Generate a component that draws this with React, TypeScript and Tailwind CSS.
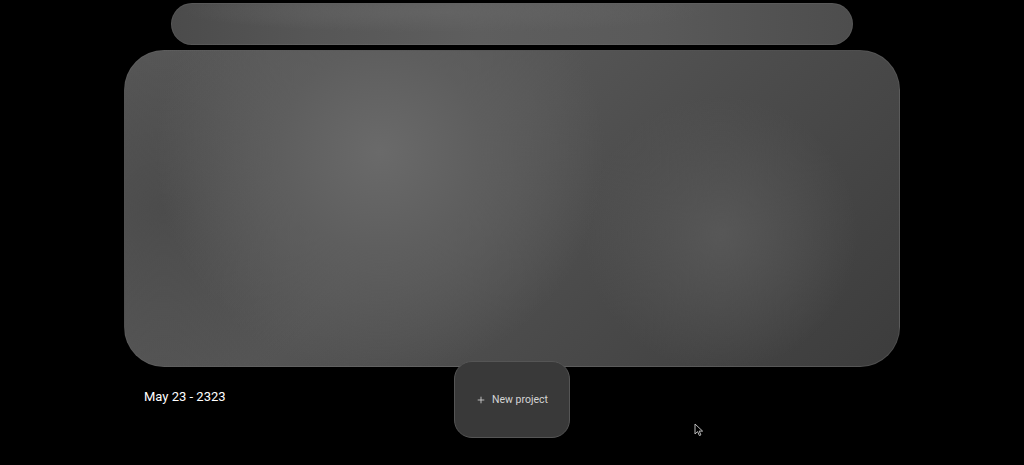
import React from 'react';
import { Plus } from 'lucide-react';

const Cursor = () => (
  <svg className="absolute left-[694px] top-[423px]" width="10" height="14" viewBox="0 0 10 14" fill="none">
    <path d="M1 1 L1 11 L3.6 8.6 L5.4 12.6 L6.9 11.9 L5.2 8.1 L8.6 8.1 Z" fill="#000" stroke="#bdbdbd" strokeWidth="1" strokeLinejoin="round" />
  </svg>
);

const TopBar = () => (
  <div className="mt-[3px] h-[42px] w-[682px] rounded-full border border-[#6a6a6a]/40 bg-[radial-gradient(ellipse_at_40%_20%,#636363_0%,transparent_45%),linear-gradient(90deg,#4b4b4b_0%,#565656_20%,#5e5e5e_45%,#5a5a5a_70%,#4d4d4d_100%)]" />
);

const HeroCard = () => (
  <div className="mt-[5px] h-[317px] w-[776px] rounded-[40px] border border-[#6a6a6a]/40 bg-[radial-gradient(circle_at_33%_32%,#6a6a6a_0%,#5e5e5e_18%,transparent_40%),radial-gradient(circle_at_77%_58%,#575757_0%,transparent_22%),radial-gradient(circle_at_5%_50%,#4c4c4c_0%,transparent_25%),linear-gradient(135deg,#585858_0%,#555555_40%,#4a4a4a_65%,#3c3c3c_100%)]" />
);

const NewProjectButton = () => (
  <button className="-mt-[6px] flex h-[77px] w-[116px] items-center justify-center gap-[6px] rounded-[18px] border border-[#555555] bg-[#393939] text-[10.5px] text-[#d4d4d4]">
    <Plus className="h-[10px] w-[10px]" strokeWidth={2} />
    <span>New project</span>
  </button>
);

export default function App() {
  return (
    <div className="relative h-[465px] w-full overflow-hidden bg-black font-['Roboto',sans-serif]">
      <div className="flex flex-col items-center">
        <TopBar />
        <HeroCard />
        <div className="grid w-[776px] grid-cols-3">
          <div className="pl-5 pt-[20px] text-[13px] text-white">May 23 - 2323</div>
          <div className="flex justify-center">
            <NewProjectButton />
          </div>
          <div />
        </div>
      </div>
      <Cursor />
    </div>
  );
}
